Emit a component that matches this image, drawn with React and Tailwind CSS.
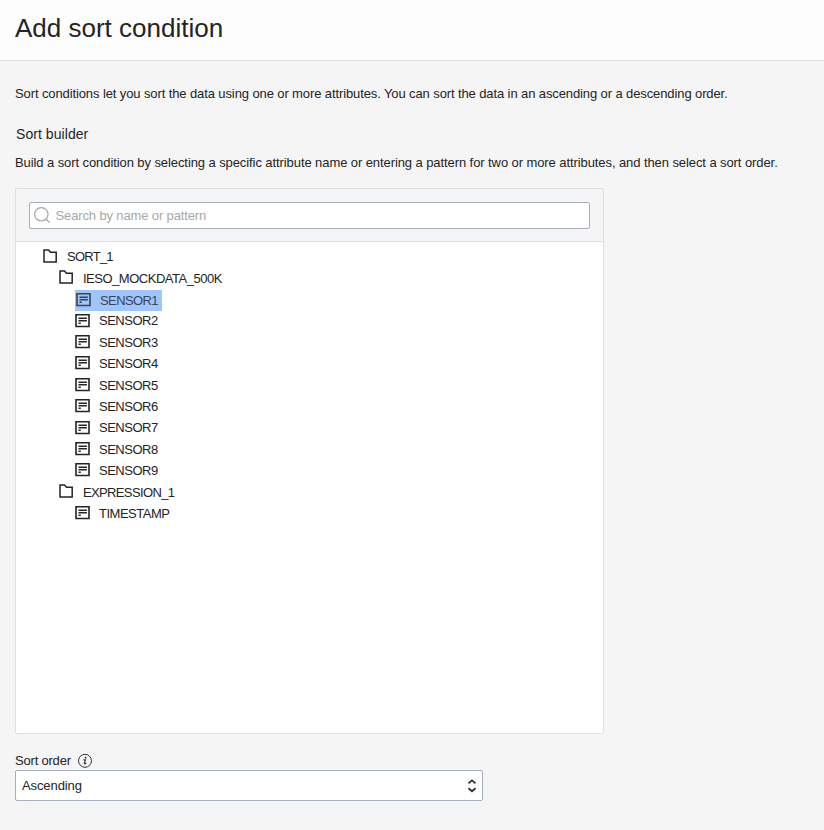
const FolderIcon = () => (
  <svg width="16" height="16" viewBox="0 0 16 16" fill="none" stroke="#242424" strokeWidth="1.5" className="shrink-0">
    <path d="M2 13.9V2.1H6.5L8.5 4.3H14.2V13.9Z" />
  </svg>
);

const AttributeIcon = ({ selected }) => (
  <svg width="15" height="15" viewBox="0 0 15 15" fill="none" stroke={selected ? "#3d4450" : "#242424"} strokeWidth="1.6" className="shrink-0">
    <path d="M1 1.8H14V13.5H1Z" />
    <path d="M3.5 5.2H11.9M3.5 7.7H11.9M3.5 10.3H5.8" strokeWidth="1.4" />
  </svg>
);

const rows = [
  { name: "SORT_1", level: 0, tracking: "tracking-[-0.75px]" },
  { name: "IESO_MOCKDATA_500K", level: 1 },
  { name: "SENSOR1", level: 2, selected: true, tracking: "pt-px tracking-[-0.6px]" },
  { name: "SENSOR2", level: 2 },
  { name: "SENSOR3", level: 2 },
  { name: "SENSOR4", level: 2 },
  { name: "SENSOR5", level: 2 },
  { name: "SENSOR6", level: 2 },
  { name: "SENSOR7", level: 2 },
  { name: "SENSOR8", level: 2 },
  { name: "SENSOR9", level: 2 },
  { name: "EXPRESSION_1", level: 1, tracking: "pt-px tracking-[-0.64px]" },
  { name: "TIMESTAMP", level: 2 },
];

const indents = ["pl-[26px]", "pl-[42px]", "pl-[59px]"];

function TreeRow({ name, level, selected, tracking = "tracking-[-0.49px]" }) {
  return (
    <li className={`flex h-[21.4px] items-center ${indents[level]}`}>
      <span
        className={
          selected
            ? "mt-px flex h-[21px] w-[87px] shrink-0 items-center gap-[9px] bg-[#9ec5fe] pl-px text-[#3d4450]"
            : "flex items-center gap-[9px]"
        }
      >
        <span className="-mt-0.5 flex">{level === 2 ? <AttributeIcon selected={selected} /> : <FolderIcon />}</span>
        <span className={`whitespace-nowrap ${tracking}`}>{name}</span>
      </span>
    </li>
  );
}

export default function App() {
  return (
    <div className="flex h-[830px] w-[824px] flex-col overflow-hidden bg-[#f5f5f5] font-['Liberation_Sans',Arial,sans-serif] text-[13px] text-[#242424]">
      <header className="flex h-[61px] shrink-0 items-center border-b border-[#dcdcdc] bg-[#fdfdfd] pb-1 pl-[15px]">
        <h1 className="text-[26px] leading-8 whitespace-nowrap">Add sort condition</h1>
      </header>
      <main className="flex flex-col pl-[15px]">
        <p className="mt-[23px] text-[13px] leading-5 tracking-[-0.107px] whitespace-nowrap">
          Sort conditions let you sort the data using one or more attributes. You can sort the data in an ascending or a descending order.
        </p>
        <h2 className="mt-5 pl-px text-sm leading-5 tracking-[0.06px] whitespace-nowrap">Sort builder</h2>
        <p className="mt-[9px] text-[13px] leading-5 tracking-[-0.085px] whitespace-nowrap">
          Build a sort condition by selecting a specific attribute name or entering a pattern for two or more attributes, and then select a sort order.
        </p>
        <section className="mt-[15px] flex h-[546px] w-[589px] flex-col rounded-xs border border-[#dae0e5] bg-white">
          <div className="h-[53px] border-b border-[#dddfe2] bg-[#f5f5f5] px-[13px] pt-[13px]">
            <label className="flex h-[27px] items-center rounded-xs border border-[#a5afba] bg-white pl-1">
              <svg width="17" height="17" viewBox="0 0 17 17" fill="none" stroke="#a3a3a3" strokeWidth="1.2" className="shrink-0">
                <circle cx="7.3" cy="7.3" r="6.7" />
                <path d="M12 12L15.6 15.6" />
              </svg>
              <input
                className="ml-[4.5px] w-[500px] bg-transparent text-[13px] tracking-[-0.13px] outline-none placeholder:text-[#a8a8a8]"
                placeholder="Search by name or pattern"
              />
            </label>
          </div>
          <ul className="flex flex-col pt-[4.25px]">
            {rows.map((row) => (
              <TreeRow key={row.name} {...row} />
            ))}
          </ul>
        </section>
        <div className="mt-[17px] flex h-5 items-center">
          <span className="tracking-[-0.2px]">Sort order</span>
          <svg width="16" height="16" viewBox="0 0 16 16" fill="none" stroke="#333" className="ml-[6px]">
            <circle cx="8" cy="7.8" r="6.5" strokeWidth="1" />
            <path d="M6.5 6.8H8.4L7.4 10.3Q7.3 11.3 9.3 10.3" strokeWidth="1.2" />
            <circle cx="8.6" cy="4.7" r=".9" fill="#333" stroke="none" />
          </svg>
        </div>
        <button className="-mt-px flex h-[31px] w-[468px] items-center justify-between rounded-xs border border-[#a5afba] bg-white pr-[5px] pl-1.5">
          <span className="tracking-[-0.1px]">Ascending</span>
          <svg width="10" height="14" viewBox="0 0 10 14" fill="none" stroke="#333" strokeWidth="1.9">
            <path d="M1.5 4.4L5 1.4L8.5 4.4M1.5 9.3L5 12.3L8.5 9.3" />
          </svg>
        </button>
      </main>
    </div>
  );
}
